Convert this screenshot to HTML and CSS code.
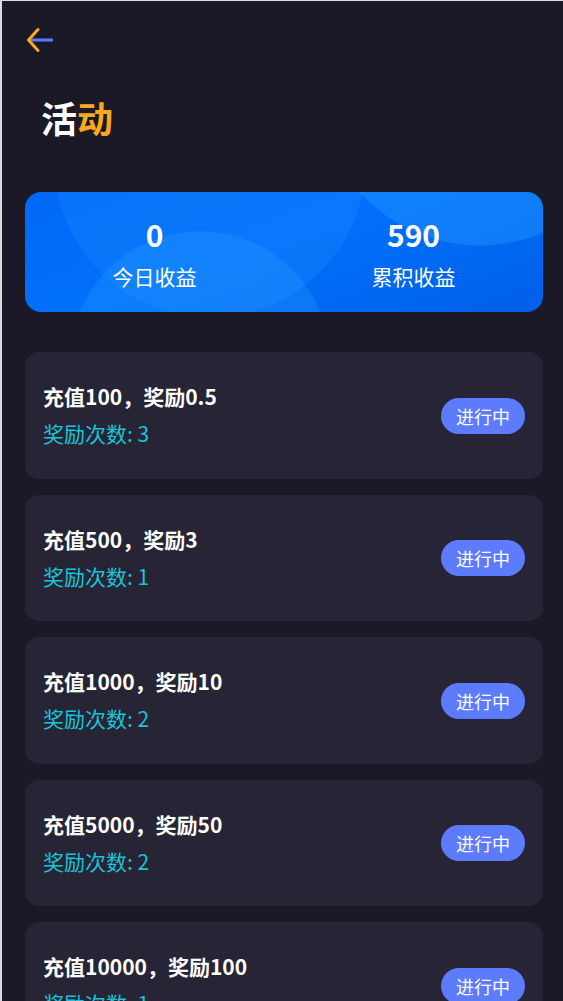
FILE: index.html
```html
<!DOCTYPE html>
<html lang="zh-CN">
<head>
  <meta charset="UTF-8" />
  <title>活动</title>
  <link rel="stylesheet" href="styles.css">
</head>
<body>
  <div class="page">
    <div class="nav">
      <a class="back" href="#" aria-label="返回">
        <svg width="26" height="26" viewBox="0 0 26 26">
          <line x1="3" y1="13" x2="25" y2="13" stroke="#5b7bff" stroke-width="3" stroke-linecap="round" />
          <polyline points="11,2.5 1.5,13 11,23.5" fill="none" stroke="#f8a91c" stroke-width="3" stroke-linecap="round" stroke-linejoin="round" />
        </svg>
      </a>
    </div>

    <h1 class="page-title">活<span class="accent">动</span></h1>

    <!-- Earnings summary -->
    <div class="stats">
      <div class="stat">
        <div class="stat-value">0</div>
        <div class="stat-label">今日收益</div>
      </div>
      <div class="stat">
        <div class="stat-value">590</div>
        <div class="stat-label">累积收益</div>
      </div>
    </div>

    <!-- Activity list -->
    <div class="activity-list">
      <div class="activity">
        <div class="activity-info">
          <div class="activity-name">充值100，奖励0.5</div>
          <div class="activity-count">奖励次数: 3</div>
        </div>
        <span class="status">进行中</span>
      </div>
      <div class="activity">
        <div class="activity-info">
          <div class="activity-name">充值500，奖励3</div>
          <div class="activity-count">奖励次数: 1</div>
        </div>
        <span class="status">进行中</span>
      </div>
      <div class="activity">
        <div class="activity-info">
          <div class="activity-name">充值1000，奖励10</div>
          <div class="activity-count">奖励次数: 2</div>
        </div>
        <span class="status">进行中</span>
      </div>
      <div class="activity">
        <div class="activity-info">
          <div class="activity-name">充值5000，奖励50</div>
          <div class="activity-count">奖励次数: 2</div>
        </div>
        <span class="status">进行中</span>
      </div>
      <div class="activity">
        <div class="activity-info">
          <div class="activity-name">充值10000，奖励100</div>
          <div class="activity-count">奖励次数: 1</div>
        </div>
        <span class="status">进行中</span>
      </div>
    </div>
  </div>
</body>
</html>
```

FILE: styles.css
```css
html,
body {
  margin: 0;
  background: #1b1928;
}

body {
  font-family: "Noto Sans CJK SC", "Noto Sans", sans-serif;
  color: #fff;
  border-top: 1px solid #dcdcdc;
  border-left: 2px solid #dcdcdc;
  min-height: 1000px;
}

.page {
  padding: 0 20px 40px 23px;
}

.nav {
  height: 77px;
  display: flex;
  align-items: center;
  padding-left: 2px;
}

.back {
  display: block;
  width: 26px;
  height: 26px;
}

.back svg {
  display: block;
}

.page-title {
  margin: 14px 0 0;
  padding: 0 0 4px 16px;
  font-size: 36px;
  line-height: 50px;
  font-weight: 700;
}

.page-title .accent {
  color: #f8a91c;
}

/* Summary card */
.stats {
  margin-top: 46px;
  height: 120px;
  box-sizing: border-box;
  display: grid;
  grid-template-columns: 1fr 1fr;
  padding-top: 24px;
  border-radius: 16px;
  overflow: hidden;
  background:
    radial-gradient(circle at 455px -109px, rgba(40, 160, 255, 0.35) 162px, transparent 163px),
    radial-gradient(circle at 175px 170px, rgba(40, 160, 255, 0.28) 130px, transparent 131px),
    radial-gradient(circle at 185px -30px, rgba(40, 150, 255, 0.22) 155px, transparent 156px),
    linear-gradient(160deg, #0068f6 0%, #0070fb 45%, #005fe8 100%);
}

.stat {
  text-align: center;
}

.stat-value {
  font-size: 30px;
  line-height: 36px;
  font-weight: 700;
}

.stat-label {
  margin-top: 9px;
  font-size: 21px;
  line-height: 30px;
}

/* Activity cards */
.activity-list {
  margin-top: 40px;
  display: flex;
  flex-direction: column;
  gap: 16px;
}

.activity {
  display: flex;
  align-items: center;
  justify-content: space-between;
  padding: 28px 18px 29.5px;
  background: #262435;
  border-radius: 14px;
}

.activity-name {
  font-size: 21px;
  line-height: 32px;
  font-weight: 700;
}

.activity-count {
  margin-top: 5px;
  font-size: 21px;
  line-height: 32px;
  color: #19c3d8;
}

.status {
  display: inline-block;
  margin-top: 2px;
  width: 84px;
  height: 36px;
  line-height: 36px;
  text-align: center;
  font-size: 18px;
  border-radius: 18px;
  background: #5d7bff;
  color: #fff;
}
```
